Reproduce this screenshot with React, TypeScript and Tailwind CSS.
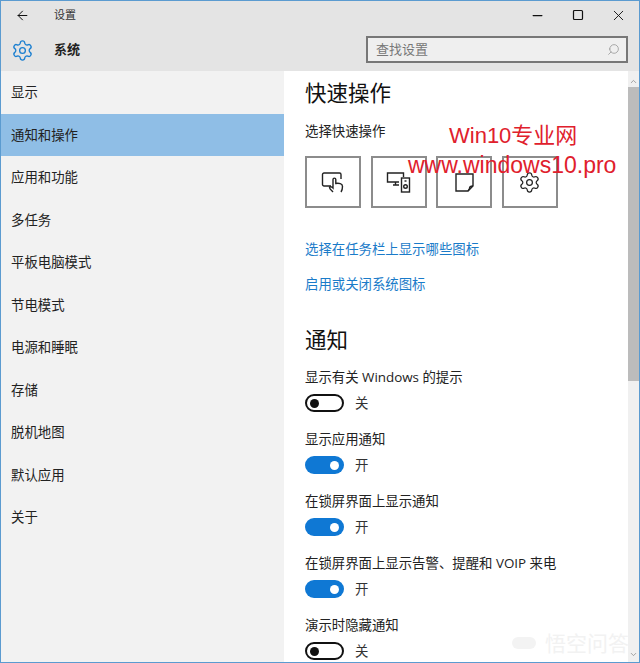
import { ArrowLeft, ChevronDown, ChevronUp, Minus, Search, Settings, Square, X } from 'lucide-react';

const navItems = ['显示', '通知和操作', '应用和功能', '多任务', '平板电脑模式', '节电模式', '电源和睡眠', '存储', '脱机地图', '默认应用', '关于'];

const toggles = [
    { label: '显示有关 Windows 的提示', on: false },
    { label: '显示应用通知', on: true },
    { label: '在锁屏界面上显示通知', on: true },
    { label: '在锁屏界面上显示告警、提醒和 VOIP 来电', on: true },
    { label: '演示时隐藏通知', on: false },
];

function Toggle({ label, on }: { label: string; on: boolean }) {
    return (
        <div className="h-[62px] shrink-0">
            <div className="h-[24px] text-[13.4px] leading-[24px] text-[#222]">{label}</div>
            <div className="flex items-center h-[28px] gap-[11px]">
                {on ? (
                    <div className="w-[39px] h-[18px] rounded-full bg-[#0f78d4] flex items-center justify-end pr-[5px]">
                        <div className="w-[9px] h-[9px] rounded-full bg-white" />
                    </div>
                ) : (
                    <div className="w-[39px] h-[18px] rounded-full border-2 border-[#111] bg-white flex items-center pl-[3px]">
                        <div className="w-[9px] h-[9px] rounded-full bg-[#111]" />
                    </div>
                )}
                <span className="text-[13.4px] text-[#333]">{on ? '开' : '关'}</span>
            </div>
        </div>
    );
}

function TouchIcon() {
    return (
        <svg width="24" height="24" viewBox="0 0 24 24" fill="none" stroke="#222" strokeWidth="1.4">
            <path d="M10 16H3a1.500 1.500 0 0 1-1.500-1.500V4.500A1.500 1.500 0 0 1 3 3h15.500A1.500 1.500 0 0 1 20 4.500V9" />
            <path d="M12 22c-1.500-1.500-3.500-3-3.500-4.500 0-1 2-1 3.500.5V9.500c0-1.800 2.800-1.800 2.800 0V13.500c3-.5 6.700 0 6.700 3 0 2-.5 4-1.500 5.500" />
        </svg>
    );
}

function DevicesIcon() {
    return (
        <svg width="26" height="24" viewBox="0 0 26 24" fill="none" stroke="#222" strokeWidth="1.4">
            <path d="M13 12H1.500V3h16v4" />
            <path d="M7 15h6M9.500 12v3" />
            <rect x="15.500" y="8" width="8" height="14" />
            <circle cx="19.500" cy="16.500" r="1.800" />
            <path d="M18.500 11h2" />
        </svg>
    );
}

function NoteIcon() {
    return (
        <svg width="19" height="19" viewBox="0 0 19 19" fill="none" stroke="#222" strokeWidth="1.4">
            <path d="M1 1h17v12l-5 5H1z" />
            <path d="M18 13c-2 0-3.500.5-3.500 2.500L13 18" />
        </svg>
    );
}

export default function App() {
    return (
        <div className="w-[640px] h-[663px] flex flex-col overflow-hidden relative border border-[#5b9bd0] bg-white font-['Open_Sans','Noto_Sans_CJK_SC',sans-serif]">
            {/* Title bar */}
            <header className="bg-[#e4e4e4] shrink-0">
                <div className="h-[28px] flex items-center">
                    <ArrowLeft className="w-[15px] h-[15px] ml-[14px] text-[#111]" strokeWidth={1.6} />
                    <span className="ml-[24px] text-[11px] text-[#333]">设置</span>
                    <div className="ml-auto flex items-center">
                        <Minus className="w-[15px] h-[15px] text-[#111] mr-[27px]" strokeWidth={2} />
                        <Square className="w-[12px] h-[12px] text-[#111] mr-[26px]" strokeWidth={2.4} />
                        <X className="w-[17px] h-[17px] text-[#111] mr-[12px]" strokeWidth={1.3} />
                    </div>
                </div>
                <div className="h-[42px] flex items-center">
                    <Settings className="w-[23px] h-[23px] ml-[10px] text-[#1b7fd0]" strokeWidth={1.4} />
                    <span className="ml-[20px] text-[13px] font-bold text-[#222]">系统</span>
                    <div className="ml-auto mr-[11px] -mt-[1px] w-[262px] h-[27px] border-2 border-[#777] bg-[#efefef] flex items-center justify-between pl-[8px] pr-[6px]">
                        <span className="text-[13px] text-[#777]">查找设置</span>
                        <Search className="w-[13px] h-[13px] text-[#999] -scale-x-100" strokeWidth={1.5} />
                    </div>
                </div>
            </header>

            <div className="flex-1 flex min-h-0">
                {/* Sidebar */}
                <nav className="w-[283px] shrink-0 bg-[#f2f2f2] flex flex-col">
                    {navItems.map((item, i) => (
                        <div
                            key={item}
                            className={`h-[42.5px] shrink-0 flex items-center pl-[10px] text-[13.4px] text-[#222] ${i === 1 ? 'bg-[#8fbee6]' : ''}`}
                        >
                            {item}
                        </div>
                    ))}
                </nav>

                {/* Content */}
                <main className="flex-1 min-w-0 pl-[21px] flex flex-col overflow-hidden">
                    <h2 className="text-[21.5px] leading-[30px] mt-[7px] text-[#111]">快速操作</h2>
                    <div className="text-[13.4px] leading-[20px] mt-[13px] text-[#222]">选择快速操作</div>
                    <div className="flex gap-[9.500px] mt-[15px]">
                        <div className="w-[56px] h-[52px] border-2 border-[#8c8c8c] flex items-center justify-center"><TouchIcon /></div>
                        <div className="w-[56px] h-[52px] border-2 border-[#8c8c8c] flex items-center justify-center"><DevicesIcon /></div>
                        <div className="w-[56px] h-[52px] border-2 border-[#8c8c8c] flex items-center justify-center"><NoteIcon /></div>
                        <div className="w-[56px] h-[52px] border-2 border-[#8c8c8c] flex items-center justify-center">
                            <Settings className="w-[23px] h-[23px] text-[#222]" strokeWidth={1.3} />
                        </div>
                    </div>
                    <a className="text-[13.4px] leading-[20px] mt-[31px] text-[#1a7bc9]">选择在任务栏上显示哪些图标</a>
                    <a className="text-[13.4px] leading-[20px] mt-[15px] text-[#1a7bc9]">启用或关闭系统图标</a>
                    <h2 className="text-[21.5px] leading-[30px] mt-[31px] text-[#111]">通知</h2>
                    <div className="mt-[10px] flex flex-col">
                        {toggles.map(t => (
                            <Toggle key={t.label} label={t.label} on={t.on} />
                        ))}
                    </div>
                </main>

                {/* Scrollbar */}
                <div className="w-[11px] shrink-0 bg-[#f0f0f0] flex flex-col items-center">
                    <ChevronUp className="w-[9px] h-[9px] mt-[6px] text-[#888]" strokeWidth={2} />
                    <div className="w-full h-[294px] mt-[1px] bg-[#bcbcbc]" />
                    <ChevronDown className="w-[9px] h-[9px] mt-auto mb-[3px] text-[#888]" strokeWidth={2} />
                </div>
            </div>

            {/* Red watermark over the tiles */}
            <div className="absolute left-[407px] top-[120px] font-['Liberation_Sans','Noto_Sans_CJK_SC',sans-serif] text-[#e0202c] whitespace-nowrap">
                <div className="pl-[41px] text-[22px] leading-[30px]">Win10专业网</div>
                <div className="text-[23px] leading-[30px] -mt-[1px]">www.windows10.pro</div>
            </div>

            {/* Faint bottom-right watermark */}
            <div className="absolute left-[511px] top-[630px] flex items-center gap-[9px] text-[#f2f2f2] text-[21px] leading-[24px] whitespace-nowrap">
                <span className="w-[24px] h-[12px] rounded-full bg-[#f3f3f3]" />
                <span>悟空问答</span>
            </div>
        </div>
    );
}
